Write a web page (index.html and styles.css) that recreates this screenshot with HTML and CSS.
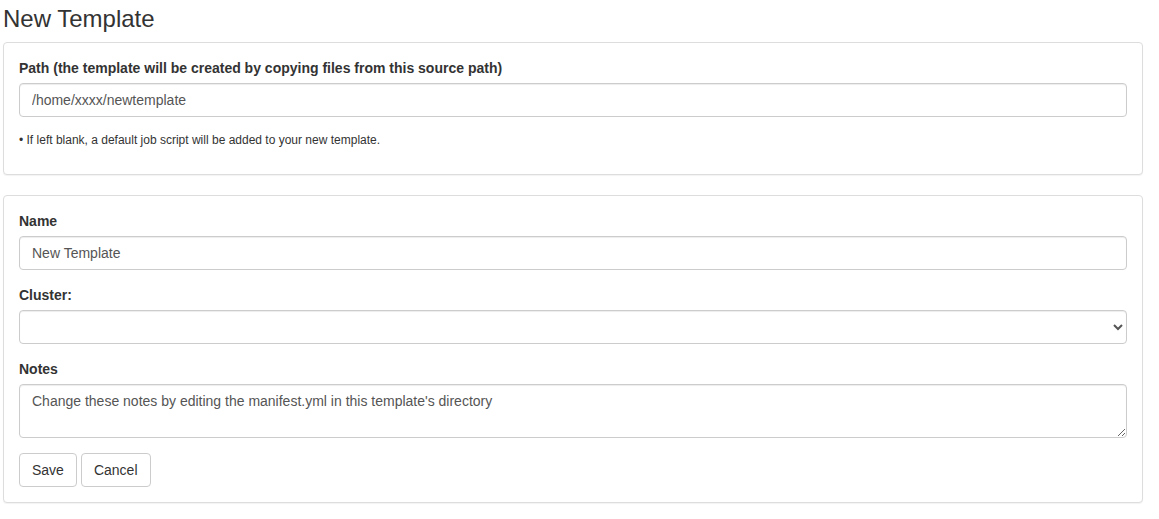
FILE: index.html
```html
<!DOCTYPE html>
<html>
<head>
<meta charset="utf-8">
<link rel="stylesheet" href="styles.css">
</head>
<body>
<div class="page">
  <h3 class="title">New Template</h3>
  <div class="panel">
    <div class="group">
      <label class="label">Path (the template will be created by copying files from this source path)</label>
      <input class="control" type="text" value="/home/xxxx/newtemplate">
    </div>
    <p class="help">• If left blank, a default job script will be added to your new template.</p>
  </div>
  <div class="panel">
    <div class="group">
      <label class="label">Name</label>
      <input class="control" type="text" value="New Template">
    </div>
    <div class="group">
      <label class="label">Cluster:</label>
      <select class="control select"><option></option></select>
    </div>
    <div class="group">
      <label class="label">Notes</label>
      <textarea class="control area">Change these notes by editing the manifest.yml in this template's directory</textarea>
    </div>
    <div class="actions">
      <button class="btn" type="button">Save</button>
      <button class="btn" type="button">Cancel</button>
    </div>
  </div>
</div>
</body>
</html>
```
FILE: styles.css
```css
* { box-sizing: border-box; }
html, body { margin: 0; padding: 0; background: #fff; }
body {
  font-family: "Liberation Sans", Arial, sans-serif;
  font-size: 14px;
  line-height: 20px;
  color: #333;
}
.page { width: 1146px; padding: 0 3px; }
.title {
  margin: 5px 0 10px 0;
  font-size: 24px;
  line-height: 27px;
  font-weight: 400;
  color: #333;
}
.panel {
  border: 1px solid #ddd;
  border-radius: 4px;
  padding: 15px;
  margin-bottom: 20px;
  box-shadow: 0 1px 1px rgba(0,0,0,.05);
  background: #fff;
}
.group { margin-bottom: 15px; display: flex; flex-direction: column; }
.label {
  display: block;
  font-weight: 700;
  margin-bottom: 5px;
  line-height: 20px;
}
.control {
  display: block;
  width: 100%;
  height: 34px;
  padding: 6px 12px;
  font-family: inherit;
  font-size: 14px;
  line-height: 20px;
  color: #555;
  background: #fff;
  border: 1px solid #ccc;
  border-radius: 4px;
  box-shadow: inset 0 1px 1px rgba(0,0,0,.075);
  margin: 0;
}
.area { height: 54px; resize: vertical; }
.help {
  margin: 0 0 10px 0;
  font-size: 12px;
  line-height: 17px;
  color: #333;
}
.actions { display: flex; gap: 4px; }
.btn {
  height: 34px;
  padding: 6px 12px;
  font-family: inherit;
  font-size: 14px;
  line-height: 20px;
  color: #333;
  background: #fff;
  border: 1px solid #ccc;
  border-radius: 4px;
  margin: 0;
}
```
